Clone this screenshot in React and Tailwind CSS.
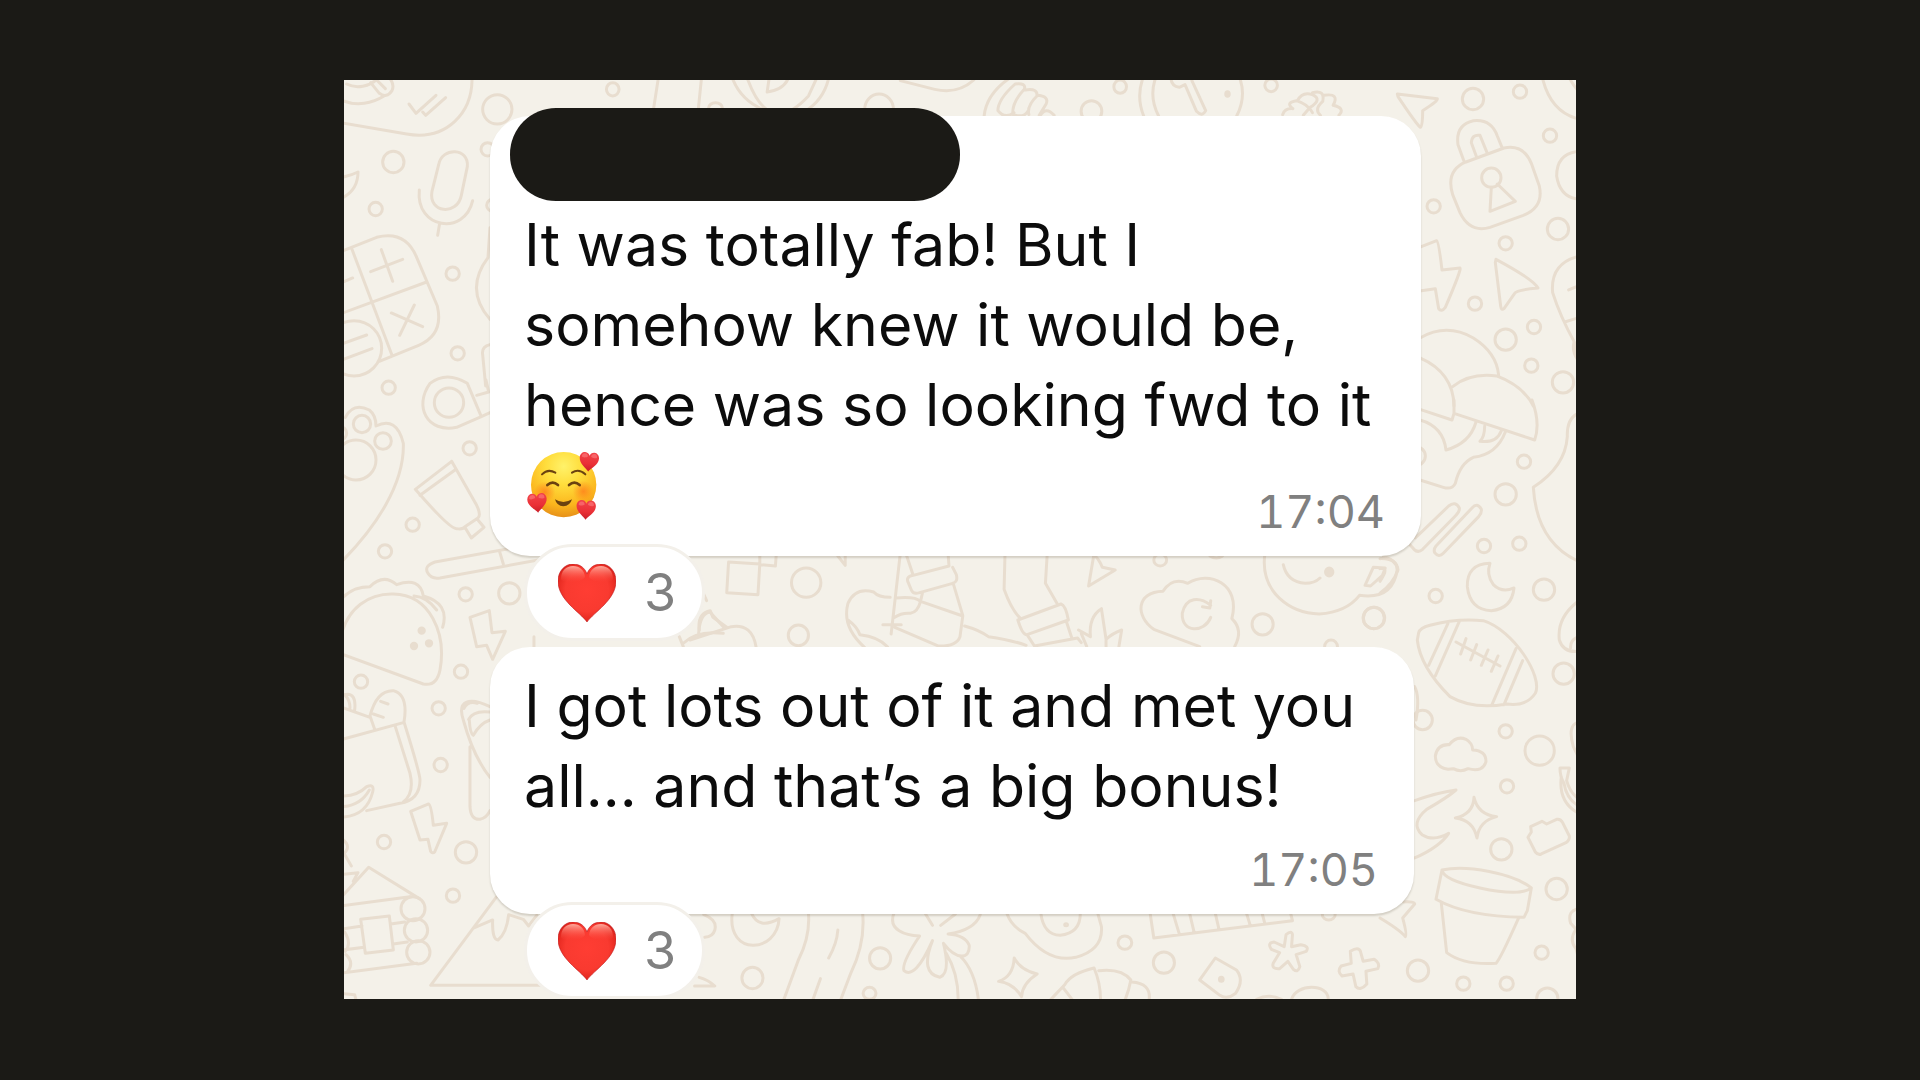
import React from "react";

const HEART = "M29 58C22 48 0 36 0 17C0 7 7 0 15 0C22 0 27 4 29 10C31 4 36 0 43 0C51 0 58 7 58 17C58 36 36 48 29 58Z";

function HeartIcon() {
  return (
    <svg viewBox="0 0 58 58" className="size-[58px] shrink-0" role="img" aria-label="Red heart">
      <defs>
        <radialGradient id="heartBody" cx="50%" cy="45%" r="62%">
          <stop offset="0" stopColor="#ff3d33" />
          <stop offset="0.6" stopColor="#f93a30" />
          <stop offset="0.85" stopColor="#e4281f" />
          <stop offset="1" stopColor="#b80d0c" />
        </radialGradient>
        <linearGradient id="heartShine" x1="0" y1="0" x2="0" y2="1">
          <stop offset="0" stopColor="#ffb0a2" stopOpacity="0.95" />
          <stop offset="1" stopColor="#ff4a3e" stopOpacity="0" />
        </linearGradient>
      </defs>
      <path d={HEART} fill="url(#heartBody)" />
      <path d={HEART} fill="none" stroke="#c0171a" strokeWidth="1" strokeOpacity="0.6" />
      <path d="M3 15C3 7 8 2 15 2C22 2 26 6 27 13C24 19 5 20 3 15Z" fill="url(#heartShine)" />
      <path d="M55 15C55 7 50 2 43 2C36 2 32 6 31 13C34 19 53 20 55 15Z" fill="url(#heartShine)" />
    </svg>
  );
}

function SmallHeart({ x, y, turn }) {
  return (
    <g transform={`translate(${x} ${y}) rotate(${turn}) translate(-30 -30)`}>
      <path d={HEART} fill="url(#loveHeart)" />
      <path d="M6 14C6 7 10 4 15 4C21 4 24 8 24 13C20 17 8 18 6 14Z" fill="#ff8a8c" fillOpacity="0.5" />
      <path d="M34 13C34 8 38 4 43 4C49 4 52 8 52 14C50 18 38 17 34 13Z" fill="#ff8a8c" fillOpacity="0.5" />
    </g>
  );
}

function LoveFace() {
  return (
    <svg viewBox="50 55 225 219" className="h-[73px] w-[75px] shrink-0" role="img" aria-label="Smiling face with hearts">
      <defs>
        <radialGradient id="faceBody" cx="50%" cy="22%" r="80%">
          <stop offset="0" stopColor="#fff26a" />
          <stop offset="0.35" stopColor="#ffdd3c" />
          <stop offset="0.75" stopColor="#fbb51d" />
          <stop offset="1" stopColor="#e48c18" />
        </radialGradient>
        <radialGradient id="blush">
          <stop offset="0" stopColor="#ff7a1a" stopOpacity="0.75" />
          <stop offset="1" stopColor="#ff7a1a" stopOpacity="0" />
        </radialGradient>
        <linearGradient id="loveHeart" x1="0" y1="0" x2="0" y2="1">
          <stop offset="0" stopColor="#f2444a" />
          <stop offset="0.6" stopColor="#ea3036" />
          <stop offset="1" stopColor="#c81e28" />
        </linearGradient>
      </defs>
      <circle cx="163" cy="162" r="98" fill="url(#faceBody)" />
      <circle cx="106" cy="184" r="32" fill="url(#blush)" />
      <circle cx="222" cy="182" r="32" fill="url(#blush)" />
      <g fill="none" stroke="#6b4210" strokeLinecap="round">
        <path d="M98 131Q116 113 138 126" strokeWidth="6" />
        <path d="M188 126Q208 113 228 131" strokeWidth="6" />
        <path d="M114 163Q130 149 146 163" strokeWidth="8" />
        <path d="M179 163Q195 149 211 163" strokeWidth="8" />
      </g>
      <path d="M137 206Q162 222 188 206Q182 226 162 227Q142 226 137 206Z" fill="#6b4210" />
      <SmallHeart x={240} y={95} turn={5} />
      <SmallHeart x={85} y={218} turn={-5} />
      <SmallHeart x={231} y={239} turn={3} />
    </svg>
  );
}

function Rings({ items }) {
  return items.map(([x, y, r, ry]) => (
    <ellipse key={`${x}-${y}`} cx={x} cy={y} rx={r} ry={ry || r} />
  ));
}

function Wallpaper() {
  return (
    <svg
      viewBox="344 80 1232 919"
      preserveAspectRatio="xMidYMid slice"
      aria-hidden="true"
      className="absolute inset-0 h-full w-full [&_*]:[vector-effect:non-scaling-stroke]"
      fill="none"
      stroke="#e8ddcf"
      strokeWidth="3"
      strokeLinecap="round"
      strokeLinejoin="round"
    >
      {/* upper left: speech balloon, microphone, calculator */}
      <g transform="translate(340 76) scale(0.3333)">
        <Rings items={[[472, 100, 44], [160, 258, 32], [107, 399, 20], [338, 593, 20], [353, 832, 20], [443, 220, 20], [458, 388, 18], [42, 817, 83]]} />
        <path d="M0 140L200 174C320 195 400 110 396 0M0 70C50 95 100 80 132 60M20 24C50 40 90 30 110 10M92 20L118 52Q140 68 156 44Q164 26 150 8M112 14L136 38" />
        <path d="M207 84L228 112L288 58M248 108L257 118L317 65" />
        <path d="M296 266C306 212 388 214 382 272L364 358C352 420 264 412 276 346ZM238 342C226 460 374 480 398 374M299 442L293 478" />
        <path d="M0 305Q30 300 54 288Q54 340 10 364" />
        <path d="M0 528L110 484Q196 462 230 544L292 690Q312 776 236 808L118 856M36 520L156 838M0 714L260 618M92 587L188 550M124 521L158 616M154 711L248 752M223 687L179 778M0 622L38 606M0 806L80 777M10 850L96 818" />
        <path d="M450 455L444 545Q372 640 450 730M450 806Q424 812 428 836L437 930" />
      </g>

      {/* middle left: camera, paw, paint tube, burger, bolt */}
      <g transform="translate(340 380) scale(0.3333)">
        <Rings items={[[146, 23, 20], [327, 68, 44], [66, 132, 26], [129, 183, 25], [48, 240, 60], [0, 160, 20], [389, 205, 20], [218, 434, 20], [135, 514, 20], [377, 643, 20], [508, 640, 32]]} />
        <path d="M270 10C220 80 262 160 350 142L424 110L382 10Q320 -28 270 10M424 110L450 98M410 46L446 36L438 0" />
        <path d="M16 112Q40 66 88 90Q108 106 108 138Q170 108 190 190C194 310 110 440 0 550" />
        <path d="M335 244L226 328Q330 448 350 446Q368 450 378 438L414 414Q424 404 410 376L335 244M348 268L240 346M412 418L432 442L394 474L376 444" />
        <path d="M640 482L285 546Q250 558 264 580Q274 598 300 594L640 532M478 512L490 552" />
        <path d="M0 664Q30 620 90 620Q130 580 170 614Q240 590 250 648Q330 670 308 742M0 780C20 680 90 640 160 642C270 644 320 760 300 870Q290 920 250 912L0 820M222 648Q260 650 290 690" />
        <circle cx="245" cy="752" r="8" fill="#e8ddcf" />
        <circle cx="267" cy="790" r="8" fill="#e8ddcf" />
        <circle cx="222" cy="798" r="8" fill="#e8ddcf" />
        <path d="M390 712L448 692L456 758L496 754L458 838L440 796L410 800Z" />
        <path d="M582 770V840M1090 640L1100 662M1030 800L1018 770M1076 760Q1080 700 1110 696L1150 740M1030 790Q1070 750 1150 760" />
      </g>

      {/* lower left: groceries, bolt, cabin, mountain */}
      <g transform="translate(340 640) scale(0.3333)">
        <Rings items={[[63, 125, 20], [363, 95, 20], [296, 205, 20], [302, 375, 20], [132, 606, 20], [378, 637, 32], [339, 767, 20], [219, 806, 36], [228, 871, 35], [235, 937, 35]]} />
        <path d="M0 300L190 248M104 268L90 228Q110 150 160 152Q206 164 192 246Q240 400 240 420Q240 480 180 490L80 512M166 260L210 400Q224 460 190 486M90 232L0 200M122 184L144 192M100 222L130 232M14 164Q50 156 44 210M14 164Q30 180 30 204" />
        <path d="M0 468Q50 470 80 440Q104 430 98 456Q80 530 0 532M0 500Q60 500 88 450" />
        <path d="M450 200C390 170 350 180 370 240Q400 350 450 412M390 320V500Q392 540 420 538Q440 534 450 512M388 240Q390 280 400 286Q420 250 450 240M386 238Q400 210 450 216M372 205Q385 180 412 190" />
        <path d="M212 514L266 492Q274 496 280 556L320 550L284 636Q278 642 272 634L264 598L240 600Z" />
        <path d="M0 776L86 682L238 776M0 798L210 770M0 1000L230 970M62 838L148 828L160 930L76 940ZM0 868L66 858M152 852L194 846M10 930L72 922M160 912L202 906M14 876Q36 910 16 934M18 944Q44 968 22 996M0 704L54 698L40 724M10 600Q34 620 12 640L34 678M0 1060L44 1064L48 1080" />
        <path d="M470 770L272 1036H640M402 864L458 840Q456 900 474 900Q500 880 506 824L550 838L566 858L590 826" />
      </g>

      {/* upper right: padlock, arrows, bolt, umbrella */}
      <g transform="translate(1380 76) scale(0.3333)">
        <Rings items={[[279, 69, 32], [420, 47, 20], [510, 179, 20], [161, 391, 20], [377, 502, 20], [534, 459, 32], [285, 683, 20], [462, 753, 20], [377, 791, 32], [454, 869, 20], [549, 919, 32], [334, 305, 29]]} />
        <path d="M52 54L172 68Q176 74 128 104Q128 150 121 154Q110 146 54 62Z" />
        <path d="M258 258L372 216Q430 204 454 262L478 330Q492 394 430 418L330 454Q270 472 240 410L218 356Q196 284 258 258M252 256L234 206Q226 146 280 134Q334 128 352 180L366 214M290 244L274 200Q276 174 300 178L322 232M334 334L330 406L406 376L352 324" />
        <path d="M124 512L170 494Q176 496 186 582L240 576Q246 578 196 694Q184 710 176 698L166 638L124 644" />
        <path d="M348 550Q460 610 474 636Q410 642 404 652L372 698Q364 704 362 690L346 560Z" />
        <path d="M486 0Q510 110 600 130M565 0Q580 30 600 50M600 226Q530 230 530 300Q540 366 600 370M600 540Q510 560 518 650Q540 720 584 800L600 870M566 642L600 628M554 738L600 724M582 800Q574 830 600 860" />
        <path d="M120 786Q200 740 280 786Q350 830 356 898M120 846Q220 890 222 990M218 932Q270 890 350 900Q430 930 460 990" />
      </g>

      {/* middle right: umbrella base, tally strokes, moon, football */}
      <g transform="translate(1380 400) scale(0.3333)">
        <Rings items={[[432, 185, 20], [377, 283, 32], [312, 438, 20], [418, 431, 20], [492, 569, 32], [167, 588, 20], [551, 821, 32], [-18, 654, 32], [108, 168, 28]]} />
        <path d="M222 0V40L216 60L120 28M222 40L464 120Q482 70 456 0M120 60Q190 80 198 150Q270 130 288 66M314 78Q314 110 300 124Q350 130 364 92M376 96Q350 164 280 172Q240 190 226 250Q216 270 190 262L120 240" />
        <path d="M106 414L206 318Q226 302 238 324Q240 334 226 348L128 448Q114 460 102 448L90 434M168 438L276 324Q292 306 304 328Q306 338 296 350L190 460Q176 474 164 458Q160 448 168 438" />
        <path d="M330 490Q260 492 262 560Q270 630 334 632Q396 626 402 564Q366 580 340 554Q318 524 330 490Z" />
        <path d="M600 38Q560 50 562 110Q556 200 460 262Q470 430 600 486M600 600Q530 650 538 720Q550 760 600 754M572 744Q570 716 600 710" />
        <path d="M116 698Q120 684 150 676Q230 654 310 662C400 690 490 830 466 880Q440 920 380 912Q280 930 210 890Q120 800 112 720ZM204 670L146 796M238 664L166 828M408 746L336 914M428 782L372 914M228 726L360 798M258 716L242 762M290 734L272 780M324 750L304 796M354 768L334 814" />
        <path d="M0 476Q50 474 54 510Q40 550 0 580M0 506Q30 500 0 544M104 860Q120 890 108 960" />
      </g>

      {/* lower right: clouds, star, camera, plant pot */}
      <g transform="translate(1380 690) scale(0.3333)">
        <Rings items={[[128, 90, 29], [377, 124, 20], [479, 182, 44], [381, 289, 20], [364, 478, 32], [530, 597, 32], [485, 788, 20], [114, 842, 32], [250, 881, 20], [380, 881, 20], [502, 926, 32]]} />
        <path d="M204 238Q166 232 166 198Q172 162 208 164Q230 136 258 148Q278 160 278 180Q318 182 318 214Q310 248 264 236Q242 248 220 236Z" />
        <path d="M104 332Q170 308 228 300Q200 324 140 358Q90 400 126 434Q160 456 206 430Q180 470 104 504" />
        <path d="M282 322Q294 374 350 380Q298 392 291 444Q280 390 226 384Q280 372 282 322Z" />
        <path d="M452 410L486 394L500 402L530 388Q542 386 548 398L568 438Q570 450 558 458L484 492Q474 496 466 486L444 442L454 426Z" />
        <path d="M186 540C260 524 400 550 454 594Q420 620 300 594Q190 570 186 540L168 628Q260 680 432 682L442 662L454 594M184 640L200 788Q250 826 348 820Q360 810 416 684" />
        <path d="M540 234H568L560 272Q570 310 600 330M540 234Q540 260 552 280Q560 330 600 350M544 260Q534 340 600 372M600 96Q560 100 580 170L600 210M600 656Q560 660 572 700L588 718Q566 750 588 776L600 820" />
        <path d="M0 684Q60 720 76 740Q82 736 68 684L104 642Q104 634 70 636" />
      </g>

      {/* strip between the two messages */}
      <g transform="translate(690 540) scale(0.4592 0.3333)">
        <Rings items={[[253, 128, 32, 44], [236, 286, 22, 31], [1024, 60, 14, 18], [1146, 36, 18, 18], [1247, 253, 23, 32], [1489, 234, 23, 32], [1396, 320, 14, 20]]} />
        <path d="M84 66L152 72L148 164L80 158ZM152 40V74L186 78L188 40M322 48L338 76L338 48M0 300L90 260Q136 250 144 322M20 270Q16 220 44 212L50 232L80 262" />
        <path d="M458 40L438 282M420 254H460M472 48L486 106M562 40L564 78L486 106Q468 110 476 130L482 150Q486 164 500 158L572 130Q584 126 580 104L572 82M574 134L594 226M506 160L502 184L594 228L588 290Q580 320 540 318L446 262M436 172Q410 172 400 156Q360 140 344 190Q330 260 380 322M344 240Q364 260 370 284Q410 290 430 320M446 232Q460 218 480 220Q496 216 502 184Q490 168 448 174M598 258Q630 270 650 290Q700 300 732 316" />
        <path d="M686 40L684 148Q700 210 720 236M778 40L774 130L800 192M714 240L808 192Q818 196 824 240L734 284Q724 286 714 240M734 284L750 318L844 294L852 308M820 246L832 296" />
        <path d="M846 270L872 290Q868 230 896 206L906 298Q920 280 940 270L934 320M852 280L864 320M906 300V320M880 40L868 138L926 90L898 82Q888 50 880 48" />
        <path d="M1010 268C970 230 970 156 1030 154Q1050 110 1084 130C1130 90 1200 130 1180 236Q1206 270 1186 320M1010 268L1110 320M1134 232C1120 280 1070 280 1072 220C1080 170 1110 170 1134 196M1134 182L1132 204L1116 200" />
        <path d="M1252 40C1240 160 1310 220 1370 222Q1430 216 1458 166Q1530 180 1540 90Q1540 60 1510 50M1292 74Q1300 126 1340 130Q1360 130 1372 114M1488 82L1514 84L1508 106L1482 138L1470 136Z" />
        <ellipse cx="1392" cy="96" rx="8" ry="12" fill="#e8ddcf" />
      </g>

      {/* strip under the second message */}
      <g transform="translate(690 900) scale(0.4592 0.3333)">
        <Rings items={[[136, 234, 23, 32], [414, 175, 23, 32], [391, 280, 14, 18], [947, 128, 15, 20], [1032, 188, 23, 32], [1391, 44, 14, 16]]} />
        <path d="M92 40C80 170 190 160 194 56Q150 90 134 40M30 44Q60 60 54 90Q50 110 32 112M20 232Q40 240 54 258H10" />
        <path d="M258 40Q262 110 236 180L204 300M376 40Q382 130 350 220L328 300M322 90Q320 130 302 174M284 236L268 298" />
        <path d="M444 40C430 90 470 106 500 108Q460 190 466 212Q490 240 528 122Q500 220 544 232Q568 220 552 130C580 180 610 180 608 136Q600 106 562 102Q620 90 632 44M512 40L528 76M578 42L546 76M558 160Q584 220 584 298M588 168Q620 210 628 298" />
        <path d="M690 40Q700 80 730 100Q780 190 840 172Q900 150 896 80L888 40M764 40Q770 104 806 106Q850 100 850 40" />
        <circle cx="819" cy="74" r="3" />
        <path d="M706 174Q720 210 756 222Q724 250 722 290Q704 250 672 244Q704 230 706 174Z" />
        <path d="M786 298L816 254Q830 220 880 204Q894 250 894 298M890 212Q940 204 960 240Q956 270 948 298M962 246Q1004 250 1000 298M812 262L832 298" />
        <path d="M1002 40L1010 114L1312 62L1308 40M1052 40L1066 104M1088 40L1098 98M1144 40L1152 88M1212 40L1220 76M1246 40L1252 72" />
        <path d="M1144 174L1190 210Q1208 240 1188 280Q1170 300 1154 286L1110 240ZM1234 298Q1260 280 1288 298M1310 298C1320 250 1390 250 1390 298" />
        <ellipse cx="1157" cy="238" rx="4" ry="6" fill="#e8ddcf" />
        <path d="M1298 104Q1310 90 1312 104L1310 140L1330 134Q1350 138 1342 154L1320 164L1328 200Q1324 220 1314 208L1302 184L1284 206Q1266 208 1270 190L1284 158L1266 148Q1256 128 1272 126L1294 140Z" />
        <path d="M1438 154Q1456 138 1460 154L1466 184L1490 178Q1504 190 1498 206L1472 214L1474 252Q1460 274 1450 260L1444 222L1420 228Q1408 214 1418 198L1440 190Z" />
      </g>

      {/* strip above the first message */}
      <g transform="translate(510 76) scale(0.5740 0.3333)">
        <Rings items={[[179, 40, 11, 20], [358, 96, 12, 16], [643, 100, 25, 46], [1063, 32, 11, 20], [1013, 106, 18, 32], [1326, 28, 11, 19]]} />
        <path d="M259 0L250 100M334 0L328 100M386 0Q400 70 440 100M412 0Q450 190 520 60L536 0M556 0Q548 70 514 106M452 0L448 48Q480 40 486 0" />
        <path d="M680 14L740 40Q780 56 808 12M876 0Q830 50 826 120M880 24Q850 70 850 104Q862 130 878 110M880 24Q900 20 896 40Q874 80 876 116Q896 126 902 106M898 42Q920 36 918 60Q900 90 904 116M918 58Q940 60 934 84L922 118M924 118Q934 90 948 118" />
        <path d="M1104 0Q1090 60 1104 120M1126 0Q1112 60 1130 120M1152 0Q1150 30 1166 34L1176 26L1196 106Q1206 124 1212 104L1188 14M1270 0Q1284 60 1266 120" />
        <path d="M1346 116Q1350 96 1364 98Q1350 80 1370 74Q1390 84 1398 110M1372 74Q1380 46 1398 56Q1416 70 1394 94L1382 118M1398 50Q1420 40 1416 76Q1400 100 1412 118M1418 58Q1446 50 1434 88Q1456 96 1444 118" />
        <ellipse cx="1250" cy="54" rx="3" ry="7" fill="#e8ddcf" />
      </g>
    </svg>
  );
}

function Reaction({ count }) {
  return (
    <button
      type="button"
      aria-label={`${count} heart reactions`}
      className="relative -mt-3 ml-[34px] flex h-[97px] w-[181px] items-center gap-7 rounded-full border-[3px] border-[#f3f0ea] bg-white pl-[31px] text-[52px] leading-none text-[#808080]"
    >
      <HeartIcon />
      <span>{count}</span>
    </button>
  );
}

const bubble = "relative rounded-[40px] bg-white shadow-[0_2px_2px_rgba(60,50,30,0.18)]";
const body = "text-[59px] leading-[80px] text-[#0c0c0c]";
const time = "text-[45px] leading-[56px] text-[#808080] tabular-nums";

export default function App() {
  return (
    <div className="flex min-h-screen justify-center bg-[#1b1a16] pb-20 pt-20 font-['Inter',sans-serif]">
      <main className="relative w-full max-w-[1232px] self-start overflow-hidden bg-[#f4f1e9] pt-9">
        <Wallpaper />
        <div className="relative ml-[146px] mr-[155px]">
          <article className={`${bubble} pl-[34px] pr-9 pt-[89px]`}>
            <div className="absolute -top-2 left-5 h-[93px] w-[450px] rounded-[46px] bg-[#1b1a16]" />
            <p className={body}>
              It was totally fab! But I
              <br />
              somehow knew it would be,
              <br />
              hence was so looking fwd to it
            </p>
            <div className="flex h-[111px] justify-between">
              <div className="pl-0.5 pt-1">
                <LoveFace />
              </div>
              <time className={`${time} self-end pb-4`}>17:04</time>
            </div>
          </article>
          <Reaction count={3} />
        </div>
        <div className="relative ml-[146px] mr-[162px] mt-1.5">
          <article className={`${bubble} flex flex-col pl-[34px] pr-9 pt-[19px]`}>
            <p className={body}>
              I got lots out of it and met you
              <br />
              all… and that’s a big bonus!
            </p>
            <time className={`${time} self-end pb-4 pt-4`}>17:05</time>
          </article>
          <Reaction count={3} />
        </div>
      </main>
    </div>
  );
}
